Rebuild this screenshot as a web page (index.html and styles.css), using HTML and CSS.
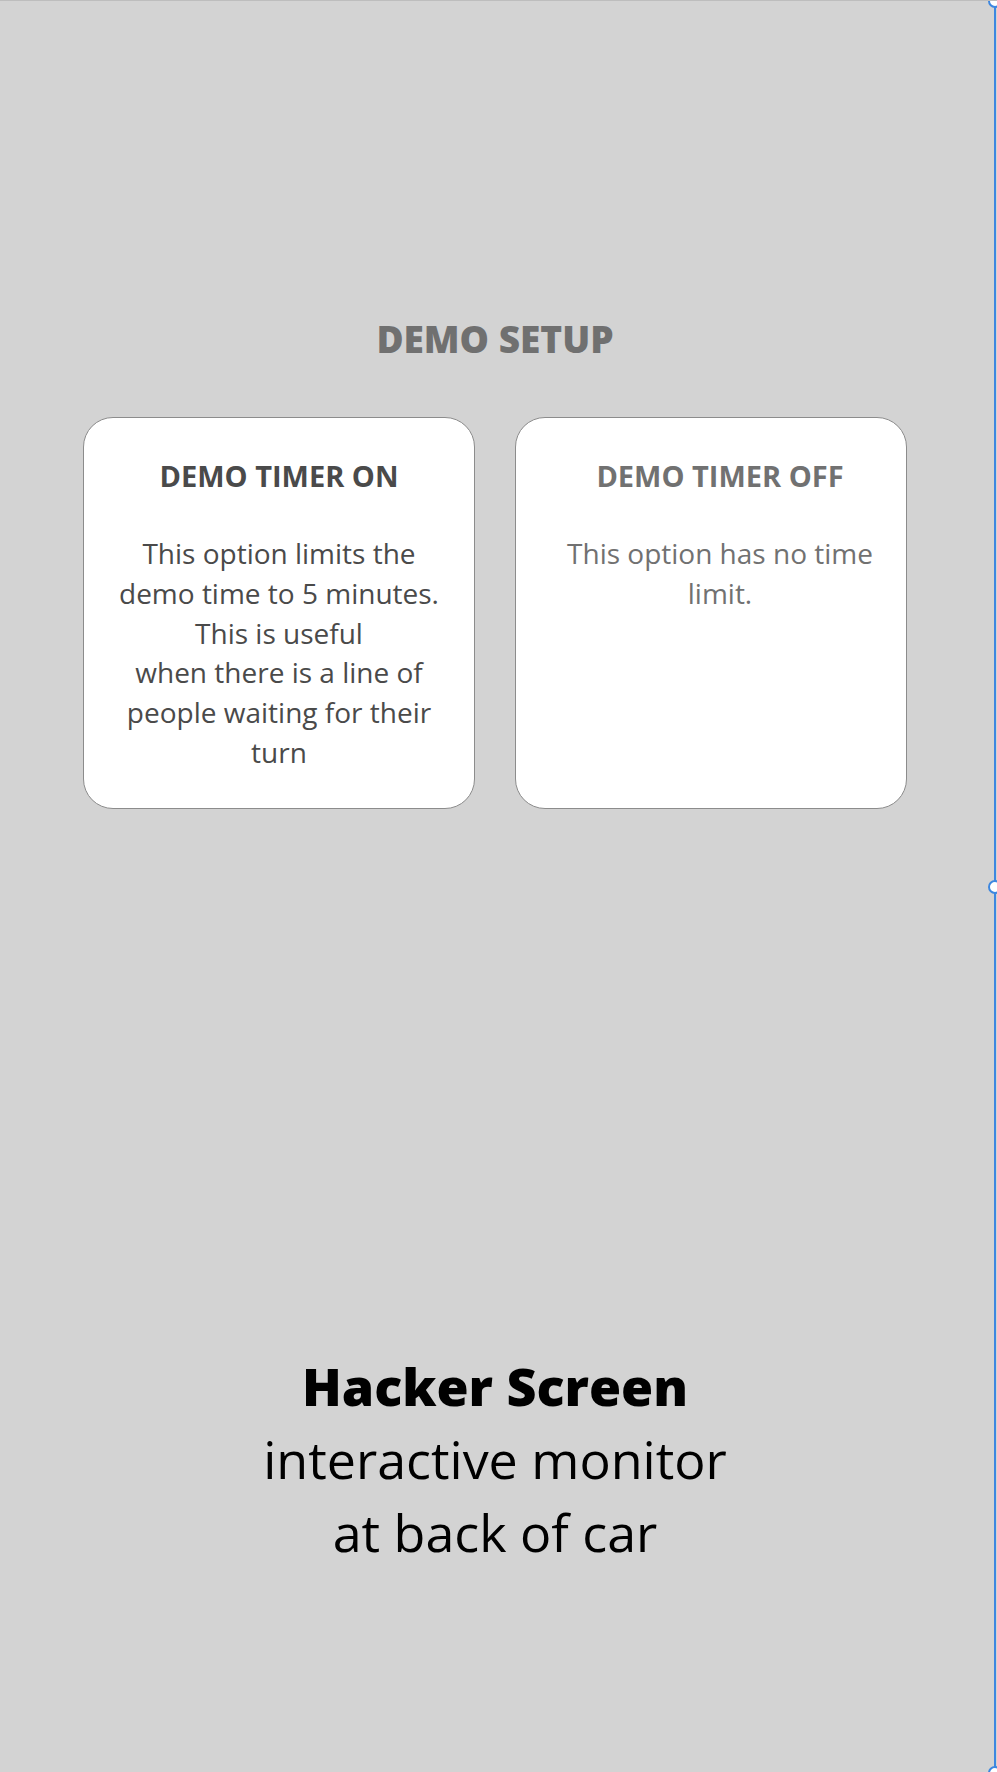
FILE: index.html
```html
<!DOCTYPE html>
<html lang="en">
<head>
<meta charset="utf-8">
<title>Demo Setup</title>
<link rel="stylesheet" href="styles.css">
</head>
<body>
<main class="page">
  <h1 class="page-title">DEMO SETUP</h1>
  <section class="options">
    <div class="option option--active">
      <h2 class="option-title">DEMO TIMER ON</h2>
      <p class="option-text">This option limits the demo time to 5 minutes. This is useful<br>when there is a line of people waiting for their turn</p>
    </div>
    <div class="option option--inactive">
      <h2 class="option-title">DEMO TIMER OFF</h2>
      <p class="option-text">This option has no time limit.</p>
    </div>
  </section>
  <footer class="caption">
    <div class="caption-title">Hacker Screen</div>
    <div class="caption-sub">interactive monitor<br>at back of car</div>
  </footer>
</main>
<div class="selection">
  <span class="handle handle--top"></span>
  <span class="handle handle--mid"></span>
  <span class="handle handle--bottom"></span>
</div>
</body>
</html>
```

FILE: styles.css
```css
html, body {
  margin: 0;
  padding: 0;
}
body {
  background: #d3d3d3;
  font-family: "Open Sans", "Noto Sans", "Liberation Sans", sans-serif;
  width: 997px;
  height: 1772px;
  overflow: hidden;
  position: relative;
  box-sizing: border-box;
  border-top: 1px solid #bdbdbd;
}
.page {
  width: 990px;
  display: flex;
  flex-direction: column;
  align-items: center;
}
.page-title {
  margin: 313px 0 0;
  font-size: 37px;
  line-height: 50px;
  font-weight: 800;
  color: #707070;
}
.options {
  display: flex;
  gap: 40px;
  margin-top: 53px;
}
.option {
  width: 392px;
  height: 392px;
  box-sizing: border-box;
  background: #fff;
  border: 1px solid #8c8c8c;
  border-radius: 30px;
  padding: 39px 26px 0;
  text-align: center;
}
.option--inactive {
  padding-left: 44px;
  padding-right: 26px;
}
.option-title {
  margin: 0;
  font-size: 29px;
  line-height: 38px;
  font-weight: 700;
}
.option-text {
  margin: 39px 0 0;
  font-size: 28px;
  line-height: 39.8px;
  font-weight: 400;
}
.option--active .option-title,
.option--active .option-text {
  color: #4a4a4a;
}
.option--inactive .option-title,
.option--inactive .option-text {
  color: #717171;
}
.caption {
  margin-top: 540px;
  text-align: center;
  color: #000;
}
.caption-title {
  font-size: 52px;
  line-height: 73px;
  font-weight: 800;
}
.caption-sub {
  font-size: 52px;
  line-height: 73px;
  font-weight: 400;
}
.selection {
  position: absolute;
  top: 0;
  right: 1px;
  width: 2px;
  height: 1772px;
  background: #3d87e0;
}
.handle {
  position: absolute;
  left: -6px;
  width: 10px;
  height: 10px;
  border: 2px solid #3d87e0;
  border-radius: 50%;
  background: #fff;
}
.handle--top { top: -7px; }
.handle--mid { top: 879px; }
.handle--bottom { top: 1765px; }
```
